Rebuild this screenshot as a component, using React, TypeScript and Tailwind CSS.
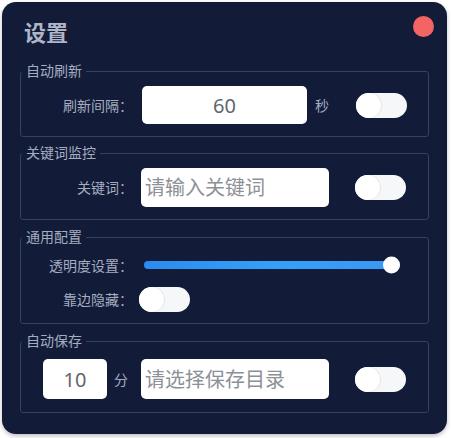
function Toggle({ className = '' }: { className?: string }) {
  return (
    <div className={`relative w-[51px] h-[25px] rounded-full bg-[#f6f7f9] shrink-0 ${className}`}>
      <div className="absolute left-0 top-0 w-[25px] h-[25px] rounded-full bg-white shadow-[1px_0_1px_rgba(0,0,0,0.08)]" />
    </div>
  );
}

function Group({ title, children, className = '' }: { title: string; children: React.ReactNode; className?: string }) {
  return (
    <fieldset className={`border border-[#36415e] rounded-[3px] ${className}`}>
      <legend className="ml-[1px] px-[4px] text-[14px] leading-[20px] text-[#a5adc0]">{title}</legend>
      {children}
    </fieldset>
  );
}

function Label({ text }: { text: string }) {
  return <span className="w-[112px] shrink-0 text-right text-[14px] text-[#a5adc0]">{text}</span>;
}

export default function App() {
  return (
    <div className="w-[451px] h-[438px] bg-white p-[2px] font-['Noto_Sans','Noto_Sans_CJK_SC',sans-serif]">
      <div className="w-[445px] h-[432px] rounded-[14px] bg-[#121b38] px-[18px] pt-[15px] shadow-[0_2px_4px_rgba(0,0,0,0.25)]">
        {/* header */}
        <div className="flex items-start justify-between">
          <h1 className="pl-[4px] text-[22px] leading-[30px] font-bold text-[#aeb6c8]">设置</h1>
          <div className="mt-[-1px] mr-[-5px] w-[21px] h-[21px] rounded-full bg-[#f36464]" />
        </div>

        <Group title="自动刷新" className="mt-[14px]">
          <div className="flex items-center pt-[5px] pb-[12px]">
            <Label text="刷新间隔：" />
            <input
              readOnly
              defaultValue="60"
              className="ml-[9px] w-[165px] h-[38px] rounded-[5px] bg-white text-center text-[20px] text-[#62666d] outline-none"
            />
            <span className="ml-[8px] text-[14px] text-[#a5adc0]">秒</span>
            <Toggle className="ml-[27px]" />
          </div>
        </Group>

        <Group title="关键词监控" className="mt-[6px]">
          <div className="flex items-center pt-[5px] pb-[12px]">
            <Label text="关键词：" />
            <input
              readOnly
              placeholder="请输入关键词"
              className="ml-[8px] w-[188px] h-[39px] rounded-[5px] bg-white pl-[4px] text-[20px] text-[#62666d] placeholder:text-[#8d9096] outline-none"
            />
            <Toggle className="ml-[26px]" />
          </div>
        </Group>

        <Group title="通用配置" className="mt-[7px]">
          <div className="flex flex-col gap-[8px] pt-[5px] pb-[11px]">
            <div className="flex items-center h-[26px]">
              <Label text="透明度设置：" />
              <div className="relative ml-[11px] w-[256px] h-[8px] rounded-full bg-gradient-to-r from-[#2a8bf0] via-[#35a0f7] to-[#3a98f5]">
                <div className="absolute right-0 top-1/2 -translate-y-1/2 w-[17px] h-[17px] rounded-full bg-white" />
              </div>
            </div>
            <div className="flex items-center h-[26px]">
              <Label text="靠边隐藏：" />
              <Toggle className="ml-[6px]" />
            </div>
          </div>
        </Group>

        <Group title="自动保存" className="mt-[7px]">
          <div className="flex items-center pl-[22px] pt-[8px] pb-[13px]">
            <input
              readOnly
              defaultValue="10"
              className="w-[64px] h-[40px] rounded-[5px] bg-white text-center text-[20px] text-[#62666d] outline-none"
            />
            <span className="ml-[7px] text-[14px] text-[#a5adc0]">分</span>
            <input
              readOnly
              placeholder="请选择保存目录"
              className="ml-[13px] w-[188px] h-[40px] rounded-[5px] bg-white pl-[4px] text-[20px] text-[#62666d] placeholder:text-[#8d9096] outline-none"
            />
            <Toggle className="ml-[26px]" />
          </div>
        </Group>
      </div>
    </div>
  );
}
